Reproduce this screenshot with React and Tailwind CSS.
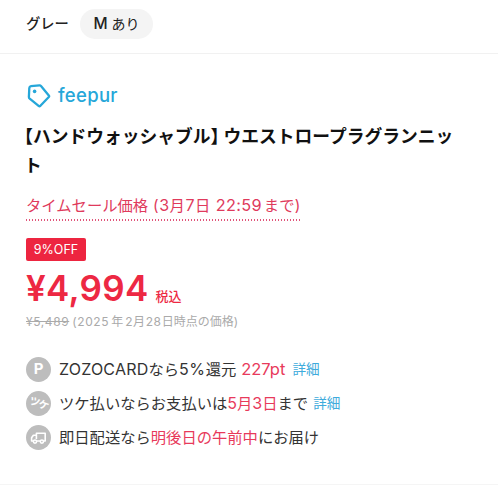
import { clsx } from 'clsx'

function TagIcon() {
  return (
    <svg className="w-[24px] h-[24px] shrink-0" viewBox="0 0 24 24" fill="none" stroke="#26a7d9" strokeWidth="2.3" strokeLinejoin="round">
      <path d="M4 2.2 L12.4 1.4 Q13.4 1.3 14 2.1 L21.8 11.4 Q22.5 12.2 21.8 13 L13.4 21.8 Q12.5 22.6 11.6 21.8 L2.7 14.6 Q1.9 13.9 1.9 12.9 L2.3 4 Q2.4 2.4 4 2.2 Z" />
      <circle cx="7.6" cy="7.4" r="1.8" fill="#26a7d9" stroke="none" />
    </svg>
  )
}

function TruckIcon() {
  return (
    <svg className="w-[17px] h-[14px]" viewBox="0 0 17 14" fill="none" stroke="#fff" strokeWidth="1.6" strokeLinejoin="round">
      <path d="M6.4 8 V2.2 H15.2 V10 H13.6 M10 10 H6.8 M3 10 H1.6 V6.8 L3.4 4.2 H6.4" />
      <circle cx="5" cy="10.6" r="1.6" />
      <circle cx="11.9" cy="10.6" r="1.6" />
    </svg>
  )
}

function InfoRow({ icon, className, children }) {
  return (
    <li className="flex items-center h-[25px]">
      <span className="w-[25px] h-[25px] mr-[8px] shrink-0 rounded-full bg-[#bdbdbd] text-white flex items-center justify-center">{icon}</span>
      <p className={clsx('flex items-center whitespace-nowrap text-[15.3px] leading-[25px] text-[#333]', className)}>{children}</p>
    </li>
  )
}

export default function App() {
  return (
    <div className="w-[498px] h-[498px] overflow-hidden bg-white font-['Inter','Noto_Sans_CJK_JP',sans-serif] text-[#222]">
      <div className="h-[54px] pt-[9px] pl-[26px] flex items-start border-b border-[#f1f1f1]">
        <span className="w-[54px] leading-[30px] text-[14.3px] font-medium">グレー</span>
        <span className="w-[73px] h-[30px] rounded-full bg-[#f4f4f4] flex items-center justify-center gap-[4px] text-[14px]">
          <span className="text-[15.5px] font-medium">M</span>
          <span className="leading-[29px] h-[30px]">あり</span>
        </span>
      </div>

      <main className="h-[431px] pl-[26px] pt-[29px] border-b border-[#f5f5f5]">
        <div className="h-[25px] flex items-center gap-[7px] pl-px text-[#26a7d9]">
          <TagIcon />
          <span className="text-[18.5px] leading-[25px] font-medium tracking-[0.3px]">feepur</span>
        </div>

        <h1 className="mt-[14px] ml-[-2px] text-[17.75px] leading-[29px] font-bold text-[#111] whitespace-nowrap [font-feature-settings:'halt']">
          【ハンドウォッシャブル】 ウエストロープラグランニッ
          <br />
          ト
        </h1>

        <div className="mt-[14px] flex">
          <p className="h-[27px] flex items-baseline bg-[repeating-linear-gradient(90deg,#e0557a_0_1.5px,transparent_1.5px_3px)] bg-[length:100%_2px] bg-bottom bg-no-repeat text-[15.3px] leading-[22px] text-[#e03a5c] whitespace-nowrap">
            <span>タイムセール価格</span>
            <span className="ml-[5px] tracking-[0.5px]">
              (<span className="text-[16px]">3</span>月<span className="text-[16px]">7</span>日
            </span>
            <span className="ml-[5px] text-[16.3px] tracking-[0.3px]">22:59</span>
            <span className="ml-[2px] tracking-[0.2px]">まで)</span>
          </p>
        </div>

        <div className="mt-[17px] w-[60px] h-[23px] rounded-[2px] bg-[#ed2540] text-white text-[12.5px] leading-[23px] text-center">9%OFF</div>

        <div className="h-[52px] pt-px flex items-baseline text-[#ed2843] whitespace-nowrap">
          <span className="text-[35px] leading-[52px] font-semibold tracking-[0.3px]">¥4,994</span>
          <span className="ml-[7px] text-[13px] font-medium">税込</span>
        </div>

        <p className="mt-[1px] flex text-[12px] leading-[16px] text-[#aaa] whitespace-nowrap">
          <span className="line-through tracking-[0.6px]">¥5,489</span>
          <span className="ml-[3px] tracking-[0.6px]">(2025</span>
          <span className="ml-[2px]">年</span>
          <span className="ml-[2px] tracking-[0.6px]">2月28</span>
          <span>日時点の価格)</span>
        </p>

        <ul className="mt-[27px] flex flex-col gap-[9px]">
          <InfoRow icon={<span className="text-[15px] font-bold">P</span>}>
            <span className="text-[16px] tracking-[0.2px]">ZOZOCARD</span>
            なら
            <span className="text-[16px] tracking-[0.6px]">5%</span>
            還元
            <span className="ml-[5px] text-[16.5px] text-[#e83a5b]">227pt</span>
            <span className="ml-[7px] text-[13.6px] text-[#3eabdc]">詳細</span>
          </InfoRow>
          <InfoRow icon={<span className="rotate-[20deg] text-[10.5px] font-bold tracking-[-1px]">ツケ</span>}>
            ツケ払いならお支払いは
            <span className="text-[#e83a5b]"><span className="text-[16px]">5</span>月<span className="text-[16px]">3</span>日</span>
            まで
            <span className="ml-[5px] text-[13.6px] text-[#3eabdc]">詳細</span>
          </InfoRow>
          <InfoRow icon={<TruckIcon />}>
            即日配送なら
            <span className="text-[#e83a5b]">明後日の午前中</span>
            にお届け
          </InfoRow>
        </ul>
      </main>
    </div>
  )
}
